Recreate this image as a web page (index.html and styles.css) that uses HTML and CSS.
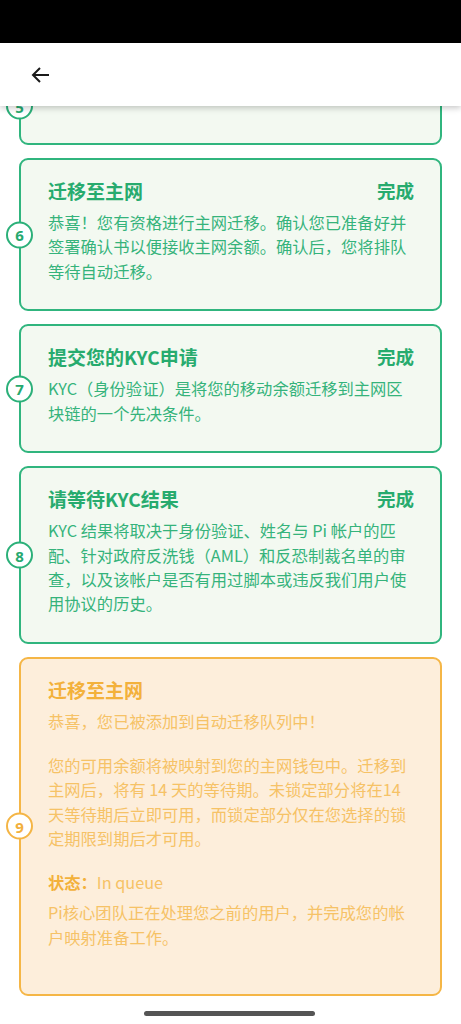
FILE: index.html
```html
<!DOCTYPE html>
<html lang="zh-CN">
<head>
<meta charset="utf-8">
<link rel="stylesheet" href="styles.css">
</head>
<body>
<div class="statusbar"></div>
<header class="appbar">
  <svg class="back" viewBox="0 0 24 24" width="24" height="24"><path d="M20 12H4.5M11 5l-7 7 7 7" fill="none" stroke="#1a1a1a" stroke-width="2"/></svg>
</header>
<main class="list">
  <section class="card done partial">
    <span class="step">5</span>
  </section>
  <section class="card done">
    <span class="step">6</span>
    <div class="head"><h2>迁移至主网</h2><span class="state">完成</span></div>
    <p>恭喜！您有资格进行主网迁移。确认您已准备好并签署确认书以便接收主网余额。确认后，您将排队等待自动迁移。</p>
  </section>
  <section class="card done">
    <span class="step">7</span>
    <div class="head"><h2>提交您的KYC申请</h2><span class="state">完成</span></div>
    <p>KYC（身份验证）是将您的移动余额迁移到主网区块链的一个先决条件。</p>
  </section>
  <section class="card done">
    <span class="step">8</span>
    <div class="head"><h2>请等待KYC结果</h2><span class="state">完成</span></div>
    <p>KYC 结果将取决于身份验证、姓名与 Pi 帐户的匹配、针对政府反洗钱（AML）和反恐制裁名单的审查，以及该帐户是否有用过脚本或违反我们用户使用协议的历史。</p>
  </section>
  <section class="card pending">
    <span class="step">9</span>
    <div class="head"><h2>迁移至主网</h2></div>
    <p>恭喜，您已被添加到自动迁移队列中！</p>
    <p class="gap">您的可用余额将被映射到您的主网钱包中。迁移到主网后，将有 14 天的等待期。未锁定部分将在14天等待期后立即可用，而锁定部分仅在您选择的锁定期限到期后才可用。</p>
    <p class="gap status"><b>状态：</b>In queue</p>
    <p class="small-gap">Pi核心团队正在处理您之前的用户，并完成您的帐户映射准备工作。</p>
  </section>
</main>
<div class="home-indicator"></div>
</body>
</html>
```
FILE: styles.css
```css
* { box-sizing: border-box; }
html, body { margin: 0; padding: 0; }
body {
  width: 461px;
  height: 1024px;
  overflow: hidden;
  background: #ffffff;
  font-family: "Noto Sans CJK SC", "Noto Sans", sans-serif;
  position: relative;
}
.statusbar { height: 43px; background: #000; }
.appbar {
  height: 63px;
  background: #fff;
  display: flex;
  align-items: center;
  padding-left: 29px;
  position: relative;
  z-index: 2;
  box-shadow: 0 2px 6px rgba(0,0,0,0.22);
}
.back { display: block; margin-top: 1px; }
.list {
  display: flex;
  flex-direction: column;
  gap: 13px;
  padding: 0 19px;
  margin-top: -39px;
  position: relative;
  z-index: 1;
}
.card {
  position: relative;
  border: 2px solid #30b57e;
  border-radius: 9px;
  background: #f3f9f1;
  padding: 15px 26px 26.5px 27px;
  color: #2aae73;
}
.card.partial { height: 78px; }
.step {
  position: absolute;
  left: -15px;
  top: 50%;
  transform: translateY(-50%);
  width: 27px;
  height: 27px;
  border-radius: 50%;
  border: 2.5px solid #2bb079;
  background: #fff;
  display: flex;
  align-items: center;
  justify-content: center;
  font-family: "Noto Sans", sans-serif;
  font-weight: 700;
  font-size: 15px;
  color: #26a96f;
}
.head {
  display: flex;
  justify-content: space-between;
  align-items: center;
  height: 30px;
  margin-bottom: 5px;
}
h2 {
  margin: 0;
  font-size: 19px;
  font-weight: 700;
  color: #27ab6e;
}
.state {
  font-size: 18.5px;
  font-weight: 700;
  color: #27ab6e;
}
p {
  margin: 0;
  font-size: 16.3px;
  line-height: 24.3px;
  color: #35b37b;
}
.card.pending {
  border-color: #f5b646;
  background: #fdeedb;
  padding-bottom: 44.5px;
}
.pending .step { border-color: #f4b545; color: #f2b03d; }
.pending h2 { color: #f3b13b; }
.pending p { color: #f6c266; line-height: 24.5px; }
.pending p b { color: #f3b13b; font-weight: 700; }
.pending p.gap { margin-top: 19px; }
.pending p.status { margin-top: 19.5px; }
.pending p.small-gap { margin-top: 5.5px; }
.home-indicator {
  position: absolute;
  left: 144px;
  bottom: 8px;
  width: 171px;
  height: 5px;
  border-radius: 3px;
  background: #555555;
}
```
